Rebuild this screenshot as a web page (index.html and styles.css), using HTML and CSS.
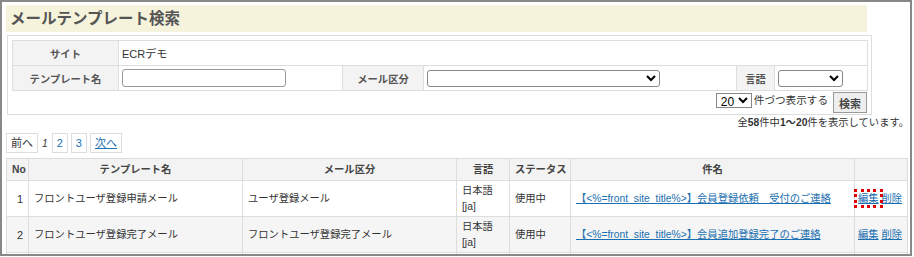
FILE: index.html
```html
<!DOCTYPE html>
<html lang="ja">
<head>
    <meta charset="UTF-8">
    <title>メールテンプレート検索</title>
    <link rel="stylesheet" href="styles.css">
</head>
<body>
<div class="frame">
    <h1 class="page-title">メールテンプレート検索</h1>

    <div class="search-box">
        <table class="search-table">
            <colgroup>
                <col class="w-label">
                <col class="w-name">
                <col class="w-kind-label">
                <col class="w-kind">
                <col class="w-lang-label">
                <col>
            </colgroup>
            <tr>
                <th class="label">サイト</th>
                <td colspan="5">ECRデモ</td>
            </tr>
            <tr>
                <th class="label">テンプレート名</th>
                <td><input type="text" class="input-name"></td>
                <th class="label">メール区分</th>
                <td><select class="select-kind"><option></option></select></td>
                <th class="label">言語</th>
                <td><select class="select-lang"><option></option></select></td>
            </tr>
        </table>
        <div class="search-actions">
            <select class="select-count"><option>20</option></select>
            <span>件づつ表示する</span>
            <button class="btn-search">検索</button>
        </div>
    </div>

    <p class="count">全<b>58</b>件中<b>1〜20</b>件を表示しています。</p>

    <div class="pager">
        <span class="page-box">前へ</span>
        <span class="page-current">1</span>
        <a class="page-box" href="#">2</a>
        <a class="page-box" href="#">3</a>
        <a class="page-box" href="#">次へ</a>
    </div>

    <table class="list">
        <colgroup>
            <col class="w-no">
            <col class="w-tname">
            <col class="w-tkind">
            <col class="w-tlang">
            <col class="w-status">
            <col class="w-subject">
            <col>
        </colgroup>
        <tr>
            <th>No</th>
            <th>テンプレート名</th>
            <th>メール区分</th>
            <th>言語</th>
            <th>ステータス</th>
            <th>件名</th>
            <th></th>
        </tr>
        <tr>
            <td class="num">1</td>
            <td>フロントユーザ登録申請メール</td>
            <td>ユーザ登録メール</td>
            <td>日本語<br>[ja]</td>
            <td>使用中</td>
            <td><a href="#">【&lt;%=front_site_title%&gt;】会員登録依頼　受付のご連絡</a></td>
            <td class="ops"><a href="#" class="focus">編集</a> <a href="#">削除</a></td>
        </tr>
        <tr class="even">
            <td class="num">2</td>
            <td>フロントユーザ登録完了メール</td>
            <td>フロントユーザ登録完了メール</td>
            <td>日本語<br>[ja]</td>
            <td>使用中</td>
            <td><a href="#">【&lt;%=front_site_title%&gt;】会員追加登録完了のご連絡</a></td>
            <td class="ops"><a href="#">編集</a> <a href="#">削除</a></td>
        </tr>
        <tr>
            <td class="num">3</td>
            <td>フロントユーザ登録完了メール</td>
            <td>フロントユーザ登録完了メール</td>
            <td>日本語<br>[ja]</td>
            <td>使用中</td>
            <td><a href="#">【&lt;%=front_site_title%&gt;】会員登録完了のご連絡</a></td>
            <td class="ops"><a href="#">編集</a> <a href="#">削除</a></td>
        </tr>
    </table>
</div>
</body>
</html>
```

FILE: styles.css
```css
body {
    margin: 0;
    font-family: "Liberation Sans", Arial, "Noto Sans CJK JP", sans-serif;
    font-size: 10.3px;
    color: #333;
    background: #fff;
}
.frame {
    width: 912px;
    height: 256px;
    border: 2px solid #888;
    padding: 3px 0 0 4px;
    box-sizing: border-box;
    overflow: hidden;
}
.page-title {
    margin: 0;
    width: 861px;
    height: 27px;
    line-height: 27px;
    padding-left: 4px;
    box-sizing: border-box;
    background: #f5f3dc;
    color: #555;
    font-size: 15.5px;
    font-weight: bold;
}
.search-box {
    margin: 3px 0 0 1px;
    width: 865px;
    height: 80px;
    border: 1px solid #ddd;
    box-sizing: border-box;
    padding: 4px 3px 0 4px;
}
.search-table {
    width: 856px;
    table-layout: fixed;
    border-collapse: collapse;
}
.w-label { width: 106px; }
.w-name { width: 224px; }
.w-kind-label { width: 81px; }
.w-kind { width: 313px; }
.w-lang-label { width: 38px; }
.search-table th,
.search-table td {
    border: 1px solid #ddd;
    height: 24px;
    padding: 0 3px;
    text-align: left;
}
.search-table td {
    font-size: 11px;
}
.search-table .label {
    background: #f3f3f3;
    color: #555;
    font-weight: bold;
    text-align: center;
}
.input-name {
    width: 164px;
    height: 18px;
    box-sizing: border-box;
    border: 1px solid #999;
    border-radius: 3px;
}
.select-kind {
    width: 233px;
    height: 17px;
    box-sizing: border-box;
    font-size: 11px;
    border: 1px solid #888;
    border-radius: 3px;
    background: #fff;
}
.select-lang {
    width: 65px;
    height: 17px;
    box-sizing: border-box;
    font-size: 11px;
    border: 1px solid #888;
    border-radius: 3px;
    background: #fff;
}
.search-actions {
    display: flex;
    justify-content: flex-end;
    align-items: flex-start;
    gap: 2px;
    margin-top: 1px;
    padding-right: 1px;
}
.select-count {
    width: 36px;
    height: 15px;
    box-sizing: border-box;
    font-size: 12px;
    padding: 0;
    border: 1px solid #888;
    border-radius: 0;
    background: #fff;
    margin-top: 1px;
}
.search-actions span {
    font-size: 10.6px;
    line-height: 17px;
    margin-right: 3px;
}
.btn-search {
    height: 21px;
    padding: 0 5px;
    font-family: inherit;
    font-size: 11px;
    font-weight: bold;
    border: 1px solid #999;
    background: #eee;
    color: #444;
}
.count {
    margin: 0;
    width: 903px;
    text-align: right;
    line-height: 16px;
}
.pager {
    display: flex;
    align-items: center;
    gap: 3px;
    margin-top: 2px;
    height: 20px;
}
.page-box {
    display: inline-block;
    border: 1px solid #ddd;
    height: 20px;
    line-height: 19px;
    padding: 0 4px;
    box-sizing: border-box;
    color: #333;
    text-decoration: none;
    font-size: 11px;
}
a.page-box {
    color: #1a6fb0;
}
a.page-box:last-child {
    text-decoration: underline;
}
.page-current {
    font-style: italic;
    padding: 0 1px;
}
.list {
    margin-top: 5px;
    width: 902px;
    table-layout: fixed;
    border-collapse: collapse;
}
.w-no { width: 22px; }
.w-tname { width: 214px; }
.w-tkind { width: 214px; }
.w-tlang { width: 53px; }
.w-status { width: 61px; }
.w-subject { width: 284px; }
.list th,
.list td {
    border: 1px solid #ddd;
    padding: 0 5px;
    text-align: left;
    line-height: 16px;
}
.list th {
    background: #f3f3f3;
    height: 21px;
    font-weight: bold;
    color: #444;
    text-align: center;
    white-space: nowrap;
}
.list td {
    height: 35px;
}
.list tr.even td {
    background: #f5f5f5;
}
.list .num {
    text-align: right;
    font-size: 11px;
}
.list a {
    color: #1a6fb0;
}
.list td.ops {
    padding: 0 3px;
    white-space: nowrap;
}
.focus {
    outline: 3px dotted #d00;
    outline-offset: 1px;
}
```
